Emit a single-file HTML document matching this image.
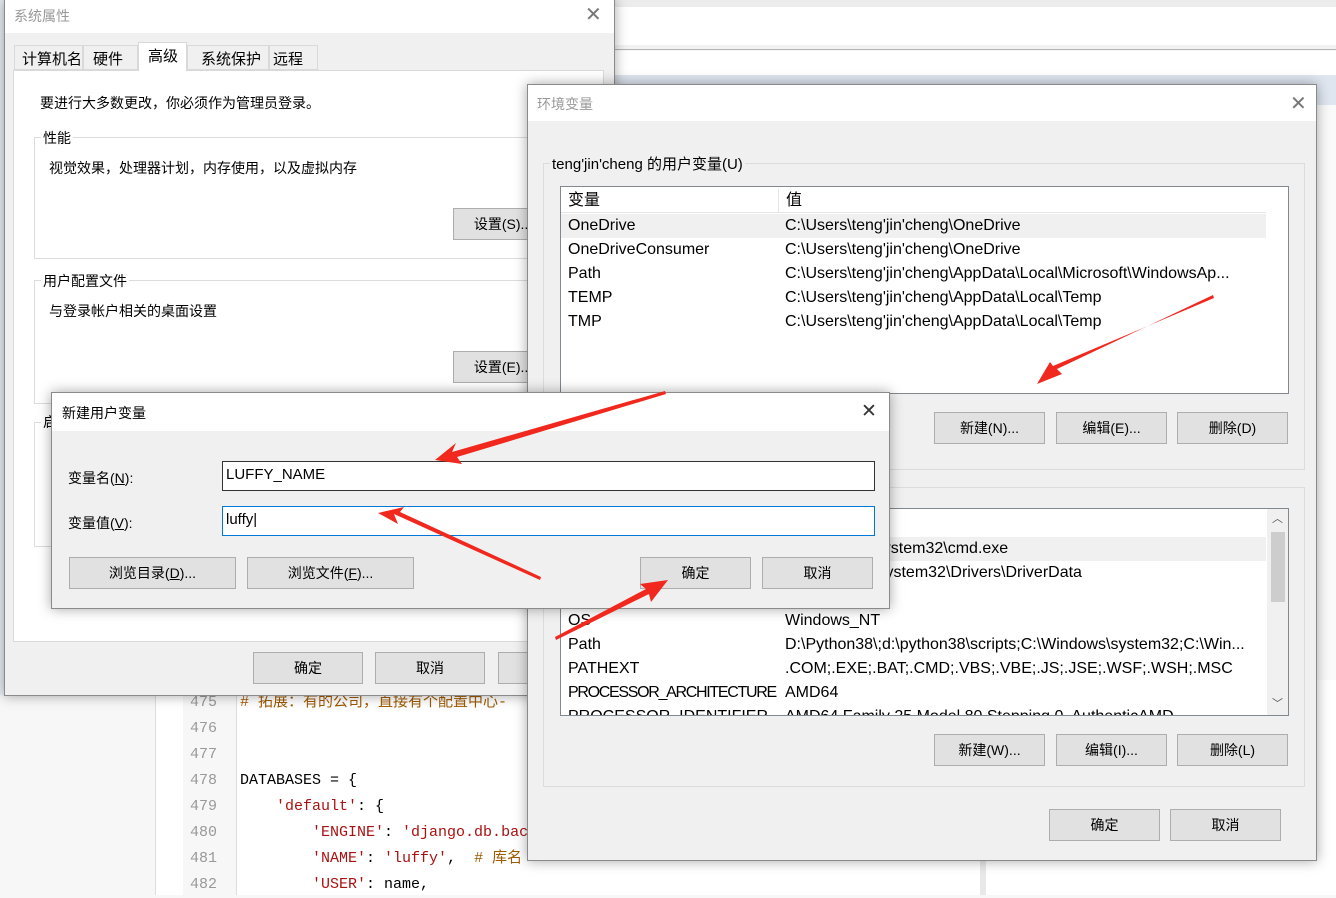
<!DOCTYPE html>
<html><head><meta charset="utf-8"><style>
*{margin:0;padding:0;box-sizing:border-box}
body{width:1336px;height:895px;position:relative;overflow:hidden;background:#f7f7f7;font-family:"Liberation Sans","Noto Sans CJK SC",sans-serif;font-size:14px;color:#000}
.a{position:absolute}
.t{position:absolute;white-space:nowrap}
.btn{position:absolute;background:#e1e1e1;border:1px solid #adadad;text-align:center;font-size:14px;line-height:30px;height:32px}
.mono{font-family:"Liberation Mono","Noto Sans CJK SC",monospace;font-size:15px}
.dlg{position:absolute;background:#f0f0f0;border:1px solid #8a8a8a;box-shadow:0 0 12px rgba(0,0,0,.35)}
.tb{position:absolute;left:0;right:0;top:0;background:#fff}
.grp{position:absolute;border:1px solid #dcdcdc}
.row{position:absolute;left:0;right:0;height:24px;line-height:24px;font-size:16px}
</style></head><body>
<div class="a" style="left:614px;top:0;width:722px;height:7px;background:#ececec"></div>
<div class="a" style="left:614px;top:7px;width:722px;height:38px;background:#fff"></div>
<div class="a" style="left:614px;top:45px;width:722px;height:5px;background:#f2f2f2;border-bottom:1px solid #b5b5b5"></div>
<div class="a" style="left:614px;top:51px;width:722px;height:24px;background:#fff"></div>
<div class="a" style="left:614px;top:75px;width:722px;height:30px;background:#dfe6f0"></div>
<div class="a" style="left:1316px;top:105px;width:20px;height:790px;background:#fafafa"></div>
<div class="a" style="left:980px;top:680px;width:356px;height:215px;background:#fff;border-left:6px solid #e8e8e8"></div>
<div class="a" style="left:0;top:0;width:4px;height:695px;background:#e8ecf4"></div>
<div class="a" style="left:155px;top:680px;width:825px;height:215px;background:#fff;border-left:1px solid #ddd"></div>
<div class="a" style="left:183px;top:680px;width:54px;height:215px;background:#f7f7f7;border-right:1px solid #ddd"></div>
<div class="mono" style="position:absolute;left:190px;top:690px;color:#999;line-height:26px">475<br>476<br>477<br>478<br>479<br>480<br>481<br>482</div>
<div class="mono" style="position:absolute;left:240px;top:690px;line-height:26px;white-space:pre"><span style="color:#a05a00"># 拓展：有的公司，直接有个配置中心-</span>

    
DATABASES = {
    <span style="color:#a11">'default'</span>: {
        <span style="color:#a11">'ENGINE'</span>: <span style="color:#a11">'django.db.bac</span>
        <span style="color:#a11">'NAME'</span>: <span style="color:#a11">'luffy'</span>,  <span style="color:#a05a00"># 库名</span>
        <span style="color:#a11">'USER'</span>: name,</div>

<div class="dlg" style="left:4px;top:-1px;width:611px;height:697px">
 <div class="tb" style="height:33px"></div>
 <div class="t" style="left:9px;top:6px;color:#999;font-size:14px">系统属性</div>
 <div class="t" style="left:580px;top:2px;color:#777;font-size:20px">✕</div>
 <div class="a" style="left:8px;top:70px;width:591px;height:572px;background:#fff;border:1px solid #d9d9d9"></div>
 <div class="a" style="left:9px;top:45px;width:69px;height:25px;background:#f0f0f0;border:1px solid #d9d9d9"></div>
 <div class="t" style="left:17px;top:48px;font-size:15px">计算机名</div>
 <div class="a" style="left:78px;top:45px;width:55px;height:25px;background:#f0f0f0;border:1px solid #d9d9d9"></div>
 <div class="t" style="left:88px;top:48px;font-size:15px">硬件</div>
 <div class="a" style="left:133px;top:42px;width:49px;height:29px;background:#fff;border:1px solid #d9d9d9;border-bottom:none"></div>
 <div class="t" style="left:143px;top:45px;font-size:15px">高级</div>
 <div class="a" style="left:182px;top:45px;width:82px;height:25px;background:#f0f0f0;border:1px solid #d9d9d9"></div>
 <div class="t" style="left:196px;top:48px;font-size:15px">系统保护</div>
 <div class="a" style="left:264px;top:45px;width:49px;height:25px;background:#f0f0f0;border:1px solid #d9d9d9"></div>
 <div class="t" style="left:268px;top:48px;font-size:15px">远程</div>
 <div class="t" style="left:35px;top:93px">要进行大多数更改，你必须作为管理员登录。</div>
 <div class="grp" style="left:29px;top:137px;width:560px;height:122px"></div>
 <div class="t" style="left:36px;top:128px;background:#fff;padding:0 2px">性能</div>
 <div class="t" style="left:44px;top:158px">视觉效果，处理器计划，内存使用，以及虚拟内存</div>
 <div class="btn" style="left:448px;top:208px;width:100px">设置(S)...</div>
 <div class="grp" style="left:29px;top:280px;width:560px;height:124px"></div>
 <div class="t" style="left:36px;top:271px;background:#fff;padding:0 2px">用户配置文件</div>
 <div class="t" style="left:44px;top:301px">与登录帐户相关的桌面设置</div>
 <div class="btn" style="left:448px;top:351px;width:100px">设置(E)...</div>
 <div class="grp" style="left:29px;top:422px;width:560px;height:125px"></div>
 <div class="t" style="left:36px;top:412px;background:#fff;padding:0 2px">启</div>
 <div class="btn" style="left:248px;top:652px;width:110px">确定</div>
 <div class="btn" style="left:370px;top:652px;width:110px">取消</div>
 <div class="btn" style="left:493px;top:652px;width:110px">应用</div>
</div>

<div class="dlg" style="left:527px;top:84px;width:790px;height:777px">
 <div class="tb" style="height:36px"></div>
 <div class="t" style="left:9px;top:9px;color:#999">环境变量</div>
 <div class="t" style="left:762px;top:6px;color:#777;font-size:20px">✕</div>
 <div class="grp" style="left:15px;top:78px;width:762px;height:307px"></div>
 <div class="t" style="left:22px;top:68px;background:#f0f0f0;padding:0 2px;font-size:15px">teng'jin'cheng 的用户变量(U)</div>
 <div class="a" style="left:32px;top:101px;width:729px;height:208px;background:#fff;border:1px solid #828790;overflow:hidden">
  <div class="row" style="top:2px;right:22px;border-bottom:1px solid #e5e5e5"><span class="t" style="left:7px">变量</span><span class="t" style="left:225px">值</span><span class="a" style="left:217px;top:0;height:24px;border-left:1px solid #e5e5e5"></span></div>
  <div class="row" style="top:27px;right:22px;background:#f0f0f0"><span class="t" style="left:7px">OneDrive</span><span class="t" style="left:224px">C:\Users\teng'jin'cheng\OneDrive</span></div>
  <div class="row" style="top:51px"><span class="t" style="left:7px">OneDriveConsumer</span><span class="t" style="left:224px">C:\Users\teng'jin'cheng\OneDrive</span></div>
  <div class="row" style="top:75px"><span class="t" style="left:7px">Path</span><span class="t" style="left:224px">C:\Users\teng'jin'cheng\AppData\Local\Microsoft\WindowsAp...</span></div>
  <div class="row" style="top:99px"><span class="t" style="left:7px">TEMP</span><span class="t" style="left:224px">C:\Users\teng'jin'cheng\AppData\Local\Temp</span></div>
  <div class="row" style="top:123px"><span class="t" style="left:7px">TMP</span><span class="t" style="left:224px">C:\Users\teng'jin'cheng\AppData\Local\Temp</span></div>
 </div>
 <div class="btn" style="left:406px;top:327px;width:111px">新建(N)...</div>
 <div class="btn" style="left:528px;top:327px;width:111px">编辑(E)...</div>
 <div class="btn" style="left:649px;top:327px;width:111px">删除(D)</div>
 <div class="grp" style="left:15px;top:402px;width:762px;height:300px"></div>
 <div class="a" style="left:32px;top:423px;width:729px;height:208px;background:#fff;border:1px solid #828790;overflow:hidden">
  <div class="row" style="top:28px;right:22px;background:#f0f0f0"><span class="t" style="left:224px">C:\Windows\system32\cmd.exe</span></div>
  <div class="row" style="top:52px"><span class="t" style="left:224px">C:\Windows\System32\Drivers\DriverData</span></div>
  <div class="row" style="top:100px"><span class="t" style="left:7px">OS</span><span class="t" style="left:224px">Windows_NT</span></div>
  <div class="row" style="top:124px"><span class="t" style="left:7px">Path</span><span class="t" style="left:224px">D:\Python38\;d:\python38\scripts;C:\Windows\system32;C:\Win...</span></div>
  <div class="row" style="top:148px"><span class="t" style="left:7px">PATHEXT</span><span class="t" style="left:224px">.COM;.EXE;.BAT;.CMD;.VBS;.VBE;.JS;.JSE;.WSF;.WSH;.MSC</span></div>
  <div class="row" style="top:172px"><span class="t" style="left:7px;letter-spacing:-1.3px">PROCESSOR_ARCHITECTURE</span><span class="t" style="left:224px">AMD64</span></div>
  <div class="row" style="top:196px"><span class="t" style="left:7px">PROCESSOR_IDENTIFIER</span><span class="t" style="left:224px">AMD64 Family 25 Model 80 Stepping 0, AuthenticAMD</span></div>
  <div class="a" style="right:0;top:0;width:21px;height:206px;background:#f0f0f0"></div>
  <div class="a" style="right:3px;top:23px;width:14px;height:70px;background:#cdcdcd"></div>
  <div class="t" style="right:5px;top:1px;font-size:11px;color:#555">︿</div>
  <div class="t" style="right:5px;top:186px;font-size:11px;color:#555">﹀</div>
 </div>
 <div class="btn" style="left:406px;top:649px;width:111px">新建(W)...</div>
 <div class="btn" style="left:528px;top:649px;width:111px">编辑(I)...</div>
 <div class="btn" style="left:649px;top:649px;width:111px">删除(L)</div>
 <div class="btn" style="left:521px;top:724px;width:111px">确定</div>
 <div class="btn" style="left:642px;top:724px;width:111px">取消</div>
</div>

<div class="dlg" style="left:51px;top:392px;width:839px;height:217px">
 <div class="tb" style="height:38px"></div>
 <div class="t" style="left:10px;top:10px">新建用户变量</div>
 <div class="t" style="left:809px;top:7px;color:#333;font-size:19px">✕</div>
 <div class="t" style="left:16px;top:75px">变量名(<u>N</u>):</div>
 <div class="a" style="left:170px;top:68px;width:653px;height:30px;background:#fff;border:1px solid #333"></div>
 <div class="t" style="left:174px;top:73px;font-size:15px">LUFFY_NAME</div>
 <div class="t" style="left:16px;top:120px">变量值(<u>V</u>):</div>
 <div class="a" style="left:170px;top:113px;width:653px;height:30px;background:#fff;border:1px solid #0078d7"></div>
 <div class="t" style="left:174px;top:118px;font-size:15px">luffy|</div>
 <div class="btn" style="left:17px;top:164px;width:167px">浏览目录(<u>D</u>)...</div>
 <div class="btn" style="left:195px;top:164px;width:167px">浏览文件(<u>F</u>)...</div>
 <div class="btn" style="left:588px;top:164px;width:111px">确定</div>
 <div class="btn" style="left:710px;top:164px;width:111px">取消</div>
</div>

<svg class="a" style="left:0;top:0" width="1336" height="895">
<g fill="#f0281e">
<polygon points="665,391 452,452 456,443 435,460 462,464 457,457 666,394"/>
<polygon points="540,580 394,514 398,524 378,513 404,507 400,512 541,577"/>
<polygon points="555,637 646,589 640,584 668,580 651,602 649,594 556,640"/>
<polygon points="1213,295 1057,369 1062,374 1037,384 1050,362 1053,366 1214,298"/>
</g></svg>
</body></html>
